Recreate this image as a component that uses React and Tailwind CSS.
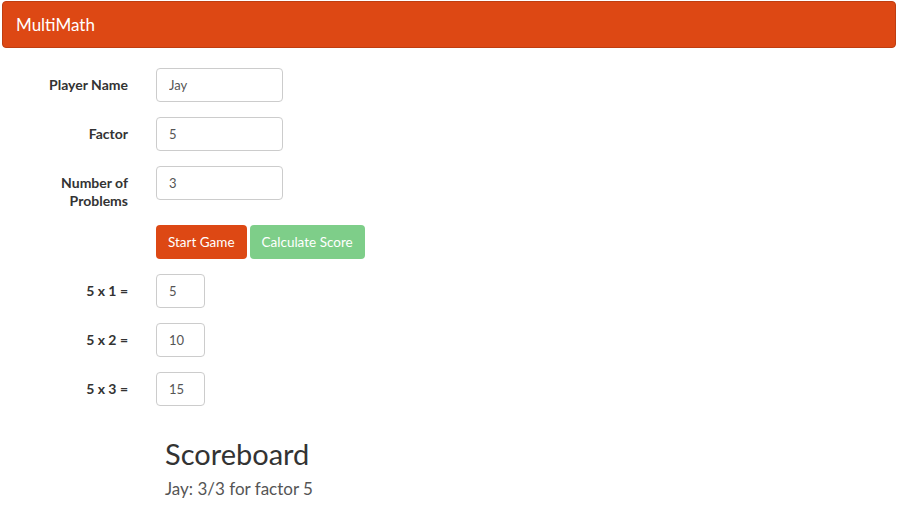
import { useState } from "react";

function FormRow({ label, children }) {
  return (
    <div className="mb-[15px] flex items-start">
      <label className="w-[128px] shrink-0 pl-[40px] pt-[8px] text-right text-[14px] font-bold leading-[18px] text-[#333]">
        {label}
      </label>
      <div className="ml-[28px]">{children}</div>
    </div>
  );
}

function TextInput({ value, onChange, width = "w-[127px]" }) {
  return (
    <input
      type="text"
      value={value}
      onChange={(e) => onChange(e.target.value)}
      className={`${width} h-[34px] rounded-[4px] border border-[#ccc] bg-white px-[12px] text-[13px] text-[#555] outline-none`}
    />
  );
}

export default function App() {
  const [name, setName] = useState("Jay");
  const [factor, setFactor] = useState("5");
  const [count, setCount] = useState("3");
  const [answers, setAnswers] = useState(["5", "10", "15"]);

  function setAnswer(i, v) {
    const next = [...answers];
    next[i] = v;
    setAnswers(next);
  }

  return (
    <div className="min-h-[518px] bg-white font-['Lato','Open_Sans',sans-serif] text-[#333]">
      <nav className="mx-[2px] mt-[1px] flex h-[47px] items-center rounded-[4px] border border-[#bf3e11] bg-[#dd4814] px-[13px]">
        <span className="text-[17px] text-white">MultiMath</span>
      </nav>

      <div className="mt-[20px]">
        <FormRow label="Player Name">
          <TextInput value={name} onChange={setName} />
        </FormRow>
        <FormRow label="Factor">
          <TextInput value={factor} onChange={setFactor} />
        </FormRow>
        <FormRow label="Number of Problems">
          <TextInput value={count} onChange={setCount} />
        </FormRow>

        <div className="mb-[15px] ml-[156px] flex gap-[3px]">
          <button className="h-[34px] rounded-[4px] bg-[#dd4814] px-[12px] text-[13.5px] text-white">
            Start Game
          </button>
          <button
            disabled
            className="h-[34px] cursor-not-allowed rounded-[4px] bg-[#7ece89] px-[12px] text-[13.5px] text-white"
          >
            Calculate Score
          </button>
        </div>

        {answers.map((a, i) => (
          <FormRow key={i} label={`${factor} x ${i + 1} =`}>
            <TextInput value={a} onChange={(v) => setAnswer(i, v)} width="w-[49px]" />
          </FormRow>
        ))}

        <div className="ml-[165px] mt-[31px]">
          <h2 className="text-[29px] leading-[33px] text-[#333]">Scoreboard</h2>
          <p className="mt-[6px] text-[17px] text-[#555]">
            {name}: 3/3 for factor {factor}
          </p>
        </div>
      </div>
    </div>
  );
}
